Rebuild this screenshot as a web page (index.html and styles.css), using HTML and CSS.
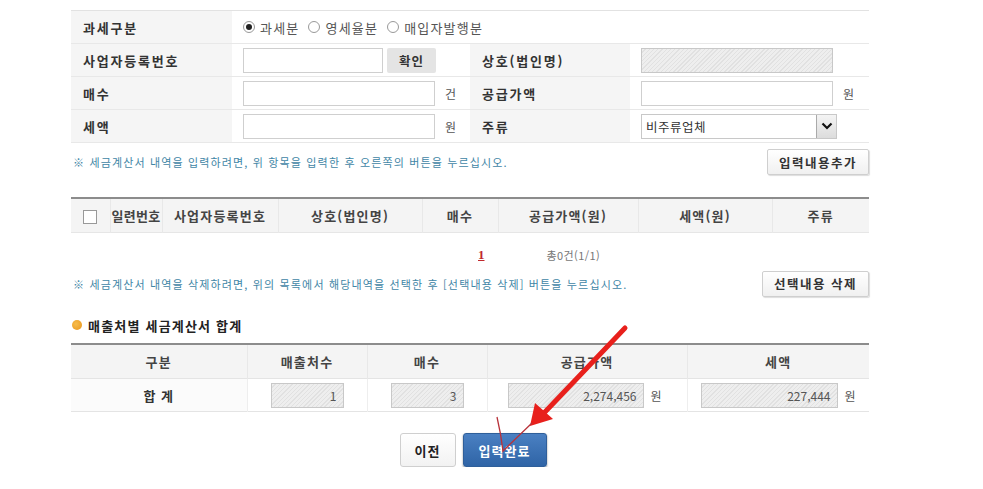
FILE: index.html
```html
<!DOCTYPE html>
<html lang="ko">
<head>
  <meta charset="UTF-8" />
  <title>매출처별 세금계산서 합계표</title>
  <link rel="stylesheet" href="styles.css">
</head>
<body>
<div class="wrap">
  <table class="form-tbl">
    <colgroup><col class="c-lab"><col class="c-val"><col class="c-lab2"><col class="c-val2"></colgroup>
    <tr>
      <th>과세구분</th>
      <td colspan="3" class="radios">
        <label><span class="radio on"></span>과세분</label>
        <label><span class="radio"></span>영세율분</label>
        <label><span class="radio"></span>매입자발행분</label>
      </td>
    </tr>
    <tr>
      <th>사업자등록번호</th>
      <td><span class="inp w140"></span><button class="btn-chk">확인</button></td>
      <th class="lab2">상호(법인명)</th>
      <td><span class="inp dis w192"></span></td>
    </tr>
    <tr>
      <th>매수</th>
      <td><span class="inp w192"></span><span class="unit">건</span></td>
      <th class="lab2">공급가액</th>
      <td><span class="inp w192"></span><span class="unit">원</span></td>
    </tr>
    <tr>
      <th>세액</th>
      <td><span class="inp w192"></span><span class="unit">원</span></td>
      <th class="lab2">주류</th>
      <td><span class="sel">비주류업체<span class="sel-arrow"><svg width="12" height="8" viewBox="0 0 12 8"><path d="M1.5 1.5 L6 6 L10.5 1.5" fill="none" stroke="#111" stroke-width="2.2"/></svg></span></span></td>
    </tr>
  </table>

  <div class="notice-row first">
    <p class="notice">※ 세금계산서 내역을 입력하려면, 위 항목을 입력한 후 오른쪽의 버튼을 누르십시오.</p>
    <button class="btn-sub">입력내용추가</button>
  </div>

  <table class="list-tbl">
    <colgroup>
      <col style="width:39px"><col style="width:52px"><col style="width:116px"><col style="width:144px">
      <col style="width:76px"><col style="width:140px"><col style="width:134px"><col style="width:97px">
    </colgroup>
    <tr>
      <th><span class="chk"></span></th>
      <th>일련번호</th>
      <th>사업자등록번호</th>
      <th>상호(법인명)</th>
      <th>매수</th>
      <th>공급가액(원)</th>
      <th>세액(원)</th>
      <th>주류</th>
    </tr>
  </table>

  <div class="paging">
    <a class="page-on">1</a>
    <span class="total">총0건(1/1)</span>
  </div>

  <div class="notice-row">
    <p class="notice">※ 세금계산서 내역을 삭제하려면, 위의 목록에서 해당내역을 선택한 후 [선택내용 삭제] 버튼을 누르십시오.</p>
    <button class="btn-sub">선택내용 삭제</button>
  </div>

  <h3 class="sec-title"><span class="bullet"></span>매출처별 세금계산서 합계</h3>

  <table class="sum-tbl">
    <colgroup>
      <col style="width:176px"><col style="width:120px"><col style="width:120px"><col style="width:200px"><col style="width:182px">
    </colgroup>
    <tr>
      <th>구분</th>
      <th>매출처수</th>
      <th>매수</th>
      <th>공급가액</th>
      <th>세액</th>
    </tr>
    <tr>
      <td class="sum-lab">합 계</td>
      <td><span class="inp dis num w73">1</span></td>
      <td><span class="inp dis num w73">3</span></td>
      <td class="amt"><span class="inp dis num w136">2,274,456</span><span class="unit">원</span></td>
      <td class="amt"><span class="inp dis num w137">227,444</span><span class="unit">원</span></td>
    </tr>
  </table>

  <div class="btn-area">
    <button class="btn-prev">이전</button>
    <button class="btn-done">입력완료</button>
  </div>
</div>

<svg class="annot" width="983" height="489" viewBox="0 0 983 489">
  <line x1="625" y1="328" x2="544" y2="413" stroke="#e8201c" stroke-width="5" stroke-linecap="round"/>
  <polygon points="530,426 535,403 553,419" fill="#e8201c"/>
  <path d="M497 417 Q501 434 503 451 L532 423" fill="none" stroke="#b8323a" stroke-width="1.3"/>
</svg>
</body>
</html>
```

FILE: styles.css
```css
html, body {
  margin: 0;
  padding: 0;
  background: #fff;
  font-family: "Noto Sans CJK KR", "Noto Sans", sans-serif;
  color: #333;
  font-size: 12px;
}
.wrap {
  width: 798px;
  margin-left: 71px;
  padding-top: 10px;
}
table {
  border-collapse: collapse;
  table-layout: fixed;
  width: 798px;
}
th, td { padding: 0; }

/* input form */
.form-tbl { border-top: 1px solid #e2e2e2; }
.form-tbl tr { height: 33px; border-bottom: 1px solid #e8e8e8; }
.form-tbl .c-lab { width: 161px; }
.form-tbl .c-val { width: 238px; }
.form-tbl .c-lab2 { width: 160px; }
.form-tbl .c-val2 { width: 239px; }
.form-tbl th {
  background: #f5f5f5;
  text-align: left;
  padding-left: 12px;
  font-size: 13px;
  font-weight: bold;
  color: #333;
  letter-spacing: 1.8px;
}
.form-tbl td {
  padding-left: 11px;
  white-space: nowrap;
  font-size: 0;
}
.form-tbl td > * { vertical-align: middle; }
.radios label {
  display: inline-flex;
  align-items: center;
  font-size: 13px;
  color: #555;
  margin-right: 9px;
  letter-spacing: 1.2px;
}
.radio {
  width: 12px;
  height: 12px;
  border: 1px solid #999;
  border-radius: 50%;
  margin-right: 5px;
  box-sizing: border-box;
  position: relative;
  background: #fff;
}
.radio.on::after {
  content: "";
  position: absolute;
  left: 2px; top: 2px;
  width: 6px; height: 6px;
  border-radius: 50%;
  background: #222;
}
.inp {
  display: inline-block;
  height: 25px;
  border: 1px solid #cfcfcf;
  box-sizing: border-box;
  background: #fff;
  font-size: 12px;
  line-height: 23px;
  color: #666;
}
.inp.dis {
  border-color: #c8c8c8;
  background: repeating-linear-gradient(135deg, #eeeeee 0, #eeeeee 2px, #e1e1e1 2px, #e1e1e1 3px);
}
.inp.num { text-align: right; padding-right: 6px; }
.w140 { width: 140px; }
.w192 { width: 192px; }
.w73 { width: 73px; }
.w136 { width: 136px; }
.w137 { width: 137px; }
.btn-chk {
  margin-left: 4px;
  width: 49px;
  height: 25px;
  border: none;
  border-radius: 2px;
  background: #e4e4e4;
  font-family: inherit;
  font-size: 12.5px;
  font-weight: bold;
  color: #333;
  letter-spacing: 1px;
}
.unit {
  font-size: 12px;
  color: #555;
  margin-left: 10px;
}
.sel {
  display: inline-flex;
  align-items: center;
  justify-content: space-between;
  width: 196px;
  height: 25px;
  box-sizing: border-box;
  border: 1px solid #c8c8c8;
  padding-left: 4px;
  font-size: 12.5px;
  color: #333;
  letter-spacing: 0.5px;
}
.sel-arrow {
  width: 19px;
  height: 23px;
  border-left: 1px solid #aaa;
  background: linear-gradient(#f4f4f4, #dcdcdc);
  display: flex;
  align-items: center;
  justify-content: center;
}

/* notices and small buttons */
.notice-row {
  display: flex;
  justify-content: space-between;
  align-items: center;
  height: 26px;
}
.notice-row.first { margin-top: 6px; margin-bottom: 22px; }
.notice {
  margin: 0 0 0 2px;
  font-size: 11px;
  color: #3f86a6;
  letter-spacing: 1.15px;
}
.btn-sub {
  height: 26px;
  padding: 0 11px;
  border: 1px solid #cfcfcf;
  border-radius: 2px;
  background: linear-gradient(#fff, #f0f0f0);
  box-shadow: 1px 1px 1px #ddd;
  font-family: inherit;
  font-size: 12.5px;
  font-weight: bold;
  color: #333;
  letter-spacing: 1.5px;
}

/* list */
.list-tbl { border-top: 2px solid #8c8c8c; }
.list-tbl tr { height: 34px; background: #f4f4f4; border-bottom: 1px solid #e6e6e6; }
.list-tbl th {
  font-size: 13px;
  font-weight: bold;
  color: #444;
  border-left: 1px solid #e8e8e8;
  white-space: nowrap;
  letter-spacing: 1.2px;
}
.list-tbl th:first-child { border-left: none; }
.list-tbl th:nth-child(2) { letter-spacing: 0.3px; }
.chk {
  display: inline-block;
  width: 12px;
  height: 12px;
  border: 1px solid #999;
  background: #fff;
  vertical-align: middle;
}
.paging {
  height: 32px;
  padding-top: 6px;
  display: flex;
  align-items: center;
  padding-left: 407px;
  gap: 62px;
}
.page-on {
  color: #c0282d;
  font-weight: bold;
  font-size: 13px;
  text-decoration: underline;
  font-family: "Liberation Serif", serif;
}
.total { font-size: 11px; color: #777; letter-spacing: 0.4px; }

/* summary */
.sec-title {
  margin: 19px 0 8px 0;
  font-size: 13px;
  font-weight: bold;
  color: #222;
  display: flex;
  align-items: center;
  letter-spacing: 1.2px;
}
.bullet {
  width: 10px;
  height: 10px;
  border-radius: 50%;
  background: radial-gradient(circle at 40% 40%, #f7bc4a, #e8951c);
  margin-left: 1px;
  margin-right: 6px;
}
.sum-tbl { border-top: 2px solid #8c8c8c; }
.sum-tbl tr { border-bottom: 1px solid #e4e4e4; }
.sum-tbl tr:first-child { height: 35px; background: #f4f4f4; }
.sum-tbl tr:nth-child(2) { height: 33px; }
.sum-tbl th {
  font-size: 13px;
  font-weight: bold;
  color: #444;
  border-left: 1px solid #e8e8e8;
  letter-spacing: 1.2px;
}
.sum-tbl th:first-child { border-left: none; }
.sum-tbl td {
  text-align: center;
  border-left: 1px solid #eeeeee;
  font-size: 0;
}
.sum-tbl td:first-child { border-left: none; }
.sum-tbl td > * { vertical-align: middle; }
.sum-tbl td.amt { text-align: left; padding-left: 20px; }
.sum-tbl td:last-child.amt { padding-left: 13px; }
.sum-tbl td.amt .unit { margin-left: 7px; }
.sum-tbl .inp { color: #555; }
.sum-lab {
  font-size: 13px !important;
  font-weight: bold;
  color: #333;
  background: #fbfbfb;
  letter-spacing: 1px;
}

/* bottom buttons */
.btn-area {
  display: flex;
  justify-content: center;
  gap: 7px;
  margin-top: 21px;
  padding-left: 6px;
}
.btn-prev, .btn-done {
  height: 34px;
  border-radius: 3px;
  font-family: inherit;
  font-size: 13px;
  font-weight: bold;
  letter-spacing: 1px;
}
.btn-prev {
  width: 56px;
  border: 1px solid #cfcfcf;
  background: linear-gradient(#fff, #f2f2f2);
  color: #222;
}
.btn-done {
  width: 84px;
  border: 1px solid #2f5f9a;
  background: linear-gradient(#4a80c2, #2f64a6);
  color: #fff;
  box-shadow: 0 1px 2px #888;
}

.annot {
  position: absolute;
  left: 0;
  top: 0;
  pointer-events: none;
}
```
